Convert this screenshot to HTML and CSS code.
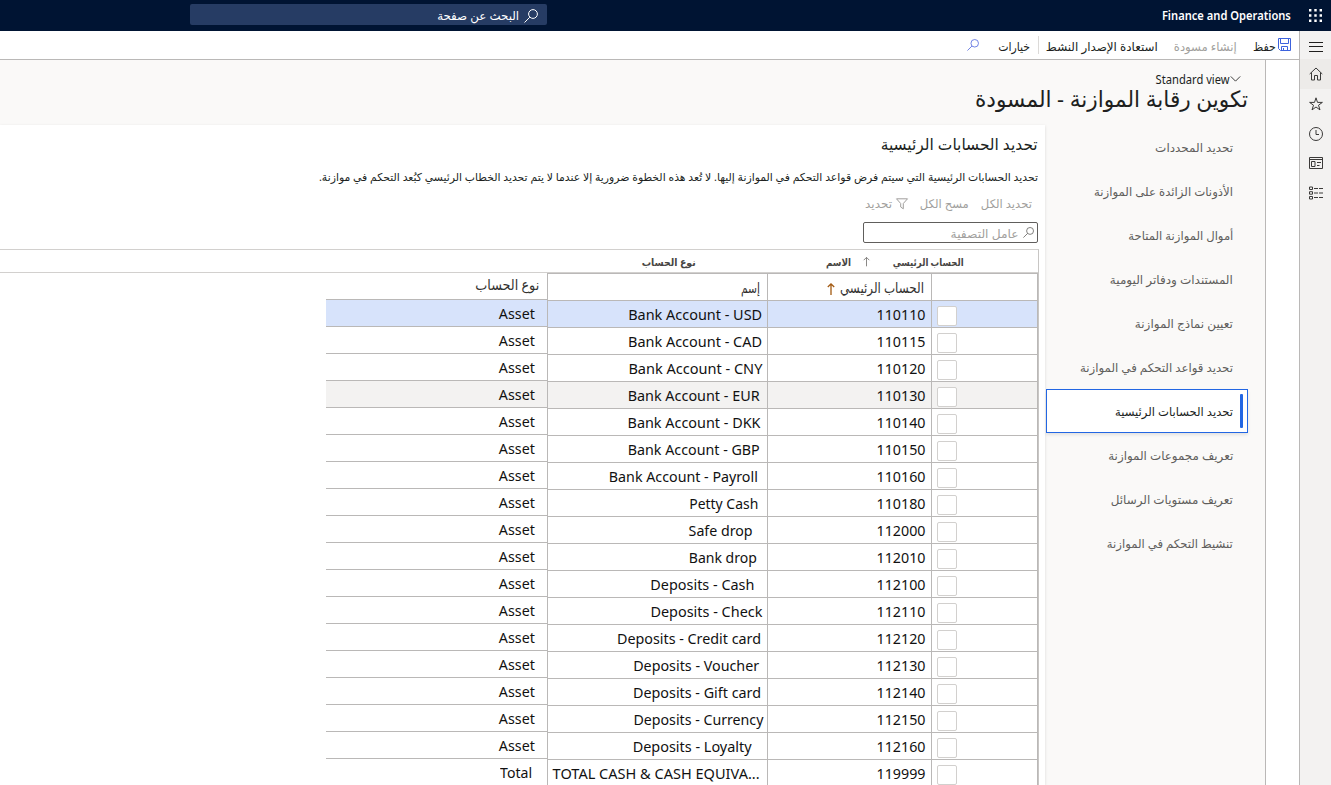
FILE: index.html
```html
<!DOCTYPE html>
<html lang="ar" dir="rtl">
<head>
<meta charset="utf-8">
<title>Finance and Operations</title>
<link rel="stylesheet" href="styles.css">
</head>
<body>
<header class="topbar">
  <svg class="waffle" viewBox="0 0 14 14"><path d="M0 0h2.600v2.600H0zM5.700 0h2.600v2.600H5.700zM11.400 0H14v2.600h-2.600zM0 5.700h2.600v2.600H0zM5.700 5.700h2.600v2.600H5.700zM11.400 5.700H14v2.600h-2.600zM0 11.400h2.600V14H0zM5.700 11.400h2.600V14H5.700zM11.400 11.400H14V14h-2.600z"/></svg>
  <span class="brand" dir="ltr" data-w="129">Finance and Operations</span>
  <div class="search">
    <svg class="mag" viewBox="0 0 14 14"><circle cx="9" cy="5" r="4.400"/><path d="M5.800 8.200L.5 13.500"/></svg>
    <span data-w="82">البحث عن صفحة</span>
  </div>
</header>
<div class="shell">
  <aside class="rail">
    <div class="rail-item menu"><svg viewBox="0 0 14 14"><path d="M0 2.500h14M0 6.500h14M0 11.500h14"/></svg></div>
    <div class="rail-item home"><svg viewBox="0 0 14 14"><path d="M.7 7L7 1l6.300 6M2.500 5.500v7.500h3V8.500h3V13h3V5.500"/></svg></div>
    <div class="rail-item"><svg viewBox="0 0 14 14"><path d="M7 .8l1.500 4.600h4.900L9.500 8.200l1.500 4.700-4-2.900-4 2.900 1.500-4.700L.6 5.400h4.900z"/></svg></div>
    <div class="rail-item"><svg viewBox="0 0 14 14"><circle cx="7" cy="7" r="6.500"/><path d="M7 3v4.500h3"/></svg></div>
    <div class="rail-item"><svg viewBox="0 0 14 14"><path d="M.5 1.500h13v11H.5zM.5 3.500h13M2.500 5.500h3.500v5H2.500zM8 6.500h4M8 9.500h2.500"/></svg></div>
    <div class="rail-item"><svg viewBox="0 0 14 14"><path d="M.5 1h3v2.500h-3zM.5 5.700h3v2.500h-3zM.5 10.500h3V13h-3zM5 2.500h4m1 0h4M5 7h4m1 0h4M5 11.500h4m1 0h4"/></svg></div>
  </aside>
  <div class="workspace">
    <div class="actions">
      <svg class="save" viewBox="0 0 13 13"><path d="M.5.5h12v12H2.500l-2-2zM2.500.5v5h8v-5M3.500 12.500v-4h6v4M5.500 10v2.500"/></svg>
      <span class="a-save" data-w="23">حفظ</span>
      <span class="a-draft" data-w="63">إنشاء مسودة</span>
      <span class="a-restore" data-w="112">استعادة الإصدار النشط</span>
      <i class="divider"></i>
      <span class="a-options" data-w="32">خيارات</span>
      <svg class="mag find" viewBox="0 0 14 14"><circle cx="9" cy="5" r="4.400"/><path d="M5.800 8.200L.5 13.500"/></svg>
    </div>
    <div class="page">
      <div class="gutter"></div>
      <div class="content">
        <div class="heading">
          <div class="view"><svg viewBox="0 0 12 7"><path d="M.5.5L6 6 11.500.5"/></svg><span dir="ltr" data-w="74">Standard view</span></div>
          <h1><span data-w="273">تكوين رقابة الموازنة - المسودة</span></h1>
        </div>
        <div class="body">
          <nav class="steps">
            <a><span data-w="78">تحديد المحددات</span></a>
            <a><span data-w="139">الأذونات الزائدة على الموازنة</span></a>
            <a><span data-w="105">أموال الموازنة المتاحة</span></a>
            <a><span data-w="123">المستندات ودفاتر اليومية</span></a>
            <a><span data-w="98">تعيين نماذج الموازنة</span></a>
            <a><span data-w="153">تحديد قواعد التحكم في الموازنة</span></a>
            <a class="current"><span data-w="118">تحديد الحسابات الرئيسية</span></a>
            <a><span data-w="125">تعريف مجموعات الموازنة</span></a>
            <a><span data-w="122">تعريف مستويات الرسائل</span></a>
            <a><span data-w="126">تنشيط التحكم في الموازنة</span></a>
          </nav>
          <main class="panel">
            <h2><span data-w="157">تحديد الحسابات الرئيسية</span></h2>
            <p class="intro"><span data-w="719">تحديد الحسابات الرئيسية التي سيتم فرض قواعد التحكم في الموازنة إليها. لا تُعد هذه الخطوة ضرورية إلا عندما لا يتم تحديد الخطاب الرئيسي كبُعد التحكم في موازنة.</span></p>
            <div class="tools">
              <span data-w="51">تحديد الكل</span>
              <span data-w="49">مسح الكل</span>
              <span class="filter"><svg viewBox="0 0 12 12"><path d="M.5.8h11L7.300 5.500v5.300L4.700 9V5.500z"/></svg><span data-w="27">تحديد</span></span>
            </div>
            <div class="quick"><svg class="mag" viewBox="0 0 14 14"><circle cx="9" cy="5" r="4.400"/><path d="M5.800 8.200L.5 13.500"/></svg><span data-w="68">عامل التصفية</span></div>
            <div class="grid">
              <div class="gridhead">
                <span class="g1" data-w="71">الحساب الرئيسي</span>
                <svg class="sort" viewBox="0 0 8 11"><path d="M4 11V.8M.8 4L4 .8 7.200 4"/></svg>
                <span class="g2" data-w="25">الاسم</span>
                <span class="g3" data-w="54">نوع الحساب</span>
              </div>
              <div class="tables">
                <div class="accounts" id="accounts">
                  <div class="row head">
                    <div class="check"></div>
                    <div class="num"><span data-w="84">الحساب الرئيسي</span><svg class="sort" viewBox="0 0 8 12"><path d="M4 12V.8M.8 4L4 .8 7.200 4"/></svg></div>
                    <div class="name"><span data-w="19">إسم</span></div>
                  </div>
                </div>
                <div class="types" id="types">
                  <div class="trow thead"><span data-w="64">نوع الحساب</span></div>
                </div>
              </div>
            </div>
          </main>
        </div>
      </div>
    </div>
  </div>
</div>
<script src="app.js"></script>
</body>
</html>
```
FILE: styles.css
```css
* { box-sizing: border-box; }
html, body { margin: 0; height: 100%; overflow: hidden; }
body { display: flex; flex-direction: column; height: 785px; background: #fff; color: #201f1e; font-family: "Noto Sans", "DejaVu Sans", sans-serif; font-size: 12px; }
svg { display: block; flex: none; fill: none; stroke: currentColor; stroke-width: 1; overflow: visible; }
span { white-space: nowrap; flex: none; }
[data-w] { display: inline-block; transform-origin: right center; }
h1, h2, p { margin: 0; font-weight: 400; }

.topbar { flex: none; height: 31px; background: #001433; color: #fff; display: flex; align-items: center; padding-right: 9px; }
.waffle { width: 13px; height: 13px; margin-bottom: 1px; fill: #fff; stroke: none; }
.brand { margin-right: 18px; font-weight: 600; font-size: 12px; }
.search { margin-right: auto; margin-left: 190px; width: 357px; height: 21px; margin-bottom: 2px; background: #263c64; border-radius: 2px; display: flex; align-items: center; padding: 2px 9px 0 0; gap: 5px; }
.mag { width: 14px; height: 14px; }

.shell { flex: 1; min-height: 0; display: flex; }
.rail { flex: none; width: 32px; background: #f3f2f1; border-left: 1px solid #bab8b7; color: #3b3a39; }
.rail-item { height: 29.700px; display: flex; align-items: center; justify-content: center; }
.rail-item svg { width: 14px; height: 14px; }
.menu { height: 28px; padding-top: 3px; color: #201f1e; }
.home { background: #edebe9; height: 30px; }
.workspace { flex: 1; min-width: 0; display: flex; flex-direction: column; }
.actions { flex: none; height: 29px; border-bottom: 1px solid #bab8b7; display: flex; align-items: center; padding: 2px 8px 0 0; }
.save { width: 13px; height: 13px; margin-bottom: 3px; color: #3d62dd; }
.a-save { margin-right: 2px; }
.a-draft { margin-right: 16px; color: #a19f9d; }
.a-restore { margin-right: 16px; }
.divider { width: 1px; height: 18px; margin-bottom: 2px; background: #dcdad8; margin-right: 7px; }
.a-options { margin-right: 8px; }
.find { width: 12px; height: 12px; margin-bottom: 3px; color: #5b6fe0; margin-right: 19px; }

.page { flex: 1; min-height: 0; display: flex; }
.gutter { flex: none; width: 34px; border-left: 1px solid #bab8b7; }
.content { flex: 1; min-width: 0; background: #faf9f8; display: flex; flex-direction: column; }
.heading { flex: none; height: 65px; padding: 10px 17px 0 0; }
.view { display: flex; align-items: center; height: 18px; padding-right: 7px; }
.view svg { width: 11px; height: 6px; }
h1 { font-size: 22.500px; line-height: 22px; height: 24px; }
.body { flex: 1; min-height: 0; display: flex; }
.steps { flex: none; width: 220px; padding: 0 17px 0 1px; }
.steps a { display: flex; align-items: center; height: 44px; padding-right: 15px; color: #605e5c; border: 0 solid #2266e3; }
.steps .current { position: relative; background: #fff; color: #201f1e; border-width: 1px; padding-right: 14px; box-shadow: 0 2px 3px #00000018; }
.current::before { content: ""; position: absolute; right: 4px; top: 4px; bottom: 4px; width: 3px; border-radius: 1px; background: #2266e3; }
.panel { flex: 1; min-width: 0; background: #fff; box-shadow: 0 1px 3px #00000020; display: flex; flex-direction: column; }
h2 { height: 40px; line-height: 38px; padding-right: 7px; font-size: 16px; }
.intro { height: 24px; line-height: 24px; padding-right: 7px; font-size: 11px; }
.tools { display: flex; align-items: center; height: 29px; padding-right: 13px; gap: 12px; color: #a19f9d; }
.filter { display: flex; align-items: center; gap: 4px; }
.filter svg { width: 12px; height: 12px; }
.quick { width: 175px; height: 21px; margin: 4px 7px 6px 0; border: 1px solid #605e5c; border-radius: 2px; display: flex; align-items: center; padding: 1px 3px 0 0; gap: 4px; color: #a19f9d; }
.quick .mag { width: 11px; height: 11px; margin-bottom: 2px; color: #605e5c; }
.grid { flex: 1; min-height: 0; margin-right: 6px; border-top: 1px solid #d2d0ce; border-right: 1px solid #c8c6c4; display: flex; flex-direction: column; }
.gridhead { flex: none; height: 23px; display: flex; align-items: center; padding: 1px 74px 0 0; font-size: 10.500px; font-weight: 600; color: #484644; border-bottom: 1px solid #d2d0ce; }
.sort { width: 7px; height: 11px; }
.gridhead .sort { margin-right: 23px; margin-bottom: 1px; color: #797775; }
.g2 { margin-right: 12px; }
.g3 { margin-right: 130px; }
.tables { display: flex; color: #111; }
.accounts { flex: none; width: 491px; border-right: 1px solid #bab8b7; border-left: 1px solid #bab8b7; border-top: 1px solid #bab8b7; }
.row { display: flex; height: 27px; border-bottom: 1px solid #bab8b7; font-size: 15px; line-height: 27px; }
.check { width: 106px; border-left: 1px solid #bab8b7; display: flex; justify-content: flex-end; padding: 5px 0 0 5px; }
.box { width: 20px; height: 20px; border: 1px solid #d2d0ce; border-radius: 2px; background: #fff; }
.num { width: 164px; border-left: 1px solid #bab8b7; padding-right: 6px; }
.head .num { display: flex; align-items: center; gap: 5px; padding-right: 7px; }
.head .sort { width: 8px; height: 12px; margin-top: 3px; color: #a35a12; stroke-width: 1.300; }
.head, .thead { font-size: 14px; color: #323130; }
.name { flex: 1; }
.head .name { padding-right: 7px; }
.types { width: 221px; }
.trow { height: 27px; line-height: 26px; font-size: 15px; border-bottom: 1px solid #bab8b7; padding-right: 12px; }
.thead { padding-right: 8px; line-height: 23px; font-size: 14px; }
.picked { background: #d7e3fb; }
.hover { background: #f3f2f1; }
```
FILE: app.js
```js
// Account number, account name, left and right edge of the name
const rows = [
  ["110110", "Bank Account - USD", 628, 762],
  ["110115", "Bank Account - CAD", 628, 762],
  ["110120", "Bank Account - CNY", 628, 762],
  ["110130", "Bank Account - EUR", 628, 760],
  ["110140", "Bank Account - DKK", 628, 761],
  ["110150", "Bank Account - GBP", 628, 760],
  ["110160", "Bank Account - Payroll", 609, 758],
  ["110180", "Petty Cash", 689, 758],
  ["112000", "Safe drop", 689, 753],
  ["112010", "Bank drop", 689, 757],
  ["112100", "Deposits - Cash", 650, 754],
  ["112110", "Deposits - Check", 650, 762],
  ["112120", "Deposits - Credit card", 617, 761],
  ["112130", "Deposits - Voucher", 633, 759],
  ["112140", "Deposits - Gift card", 633, 761],
  ["112150", "Deposits - Currency", 633, 763],
  ["112160", "Deposits - Loyalty", 633, 752],
  ["119999", "TOTAL CASH & CASH EQUIVA...", 553, 760]
];
const accounts = document.getElementById("accounts");
const types = document.getElementById("types");
rows.forEach(([num, name, left, right], i) => {
  const state = i === 0 ? " picked" : i === 3 ? " hover" : "";
  const label = name.replace("&", "&amp;");
  const type = i === rows.length - 1 ? ["Total", 32, 15] : ["Asset", 36, 12];
  accounts.insertAdjacentHTML("beforeend",
    `<div class="row${state}"><div class="check"><i class="box"></i></div><div class="num"><span dir="ltr" data-w="49">${num}</span></div><div class="name" style="padding-right:${767 - right}px"><span dir="ltr" data-w="${right - left}">${label}</span></div></div>`);
  types.insertAdjacentHTML("beforeend",
    `<div class="trow${state}" style="padding-right:${type[2]}px"><span dir="ltr" data-w="${type[1]}">${type[0]}</span></div>`);
});
document.querySelectorAll("[data-w]").forEach(el => {
  const natural = el.getBoundingClientRect().width;
  const target = +el.dataset.w;
  el.style.transform = `scaleX(${target / natural})`;
  el.style.marginLeft = `${target - natural}px`;
});
```
